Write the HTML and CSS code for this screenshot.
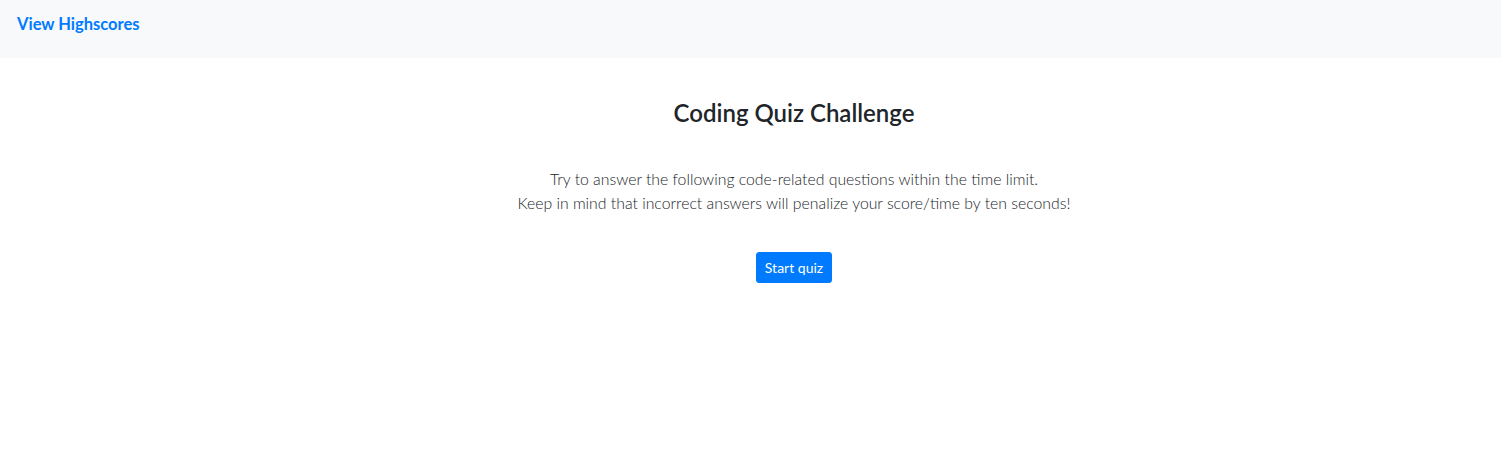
FILE: index.html
```html
<!DOCTYPE html>
<html lang="en">
<head>
<meta charset="utf-8">
<title>Coding Quiz Challenge</title>
<link rel="stylesheet" href="styles.css">
</head>
<body>
<nav class="navbar">
  <a class="nav-link" href="#">View Highscores</a>
</nav>
<main class="intro">
  <h1 class="title">Coding Quiz Challenge</h1>
  <p class="lead">Try to answer the following code-related questions within the time limit.<br>Keep in mind that incorrect answers will penalize your score/time by ten seconds!</p>
  <button class="btn" type="button">Start quiz</button>
</main>
</body>
</html>
```
FILE: styles.css
```css
* { box-sizing: border-box; }
html, body { margin: 0; padding: 0; }
body {
  font-family: Lato, "Open Sans", "Noto Sans", sans-serif;
  color: #212529;
  background: #fff;
  font-size: 16px;
  line-height: 1.5;
}
.navbar {
  background: #f8f9fa;
  height: 58px;
  display: flex;
  align-items: flex-start;
  padding: 12px 17px 0;
}
.nav-link {
  color: #007bff;
  text-decoration: none;
  font-weight: 700;
  font-size: 16.5px;
  line-height: 24px;
}
.intro {
  display: flex;
  flex-direction: column;
  align-items: center;
  text-align: center;
  padding-top: 41px;
  padding-left: 87px;
}
.title {
  margin: 0;
  font-size: 24px;
  font-weight: 600;
  line-height: 1.2;
}
.lead {
  margin: 39px 0 37px;
  font-size: 15.8px;
  font-weight: 300;
  line-height: 24px;
}
.btn {
  font-family: inherit;
  background: #007bff;
  color: #fff;
  border: 1px solid #007bff;
  border-radius: 3px;
  font-size: 14px;
  line-height: 21px;
  padding: 4px 8px;
  cursor: pointer;
}
```
